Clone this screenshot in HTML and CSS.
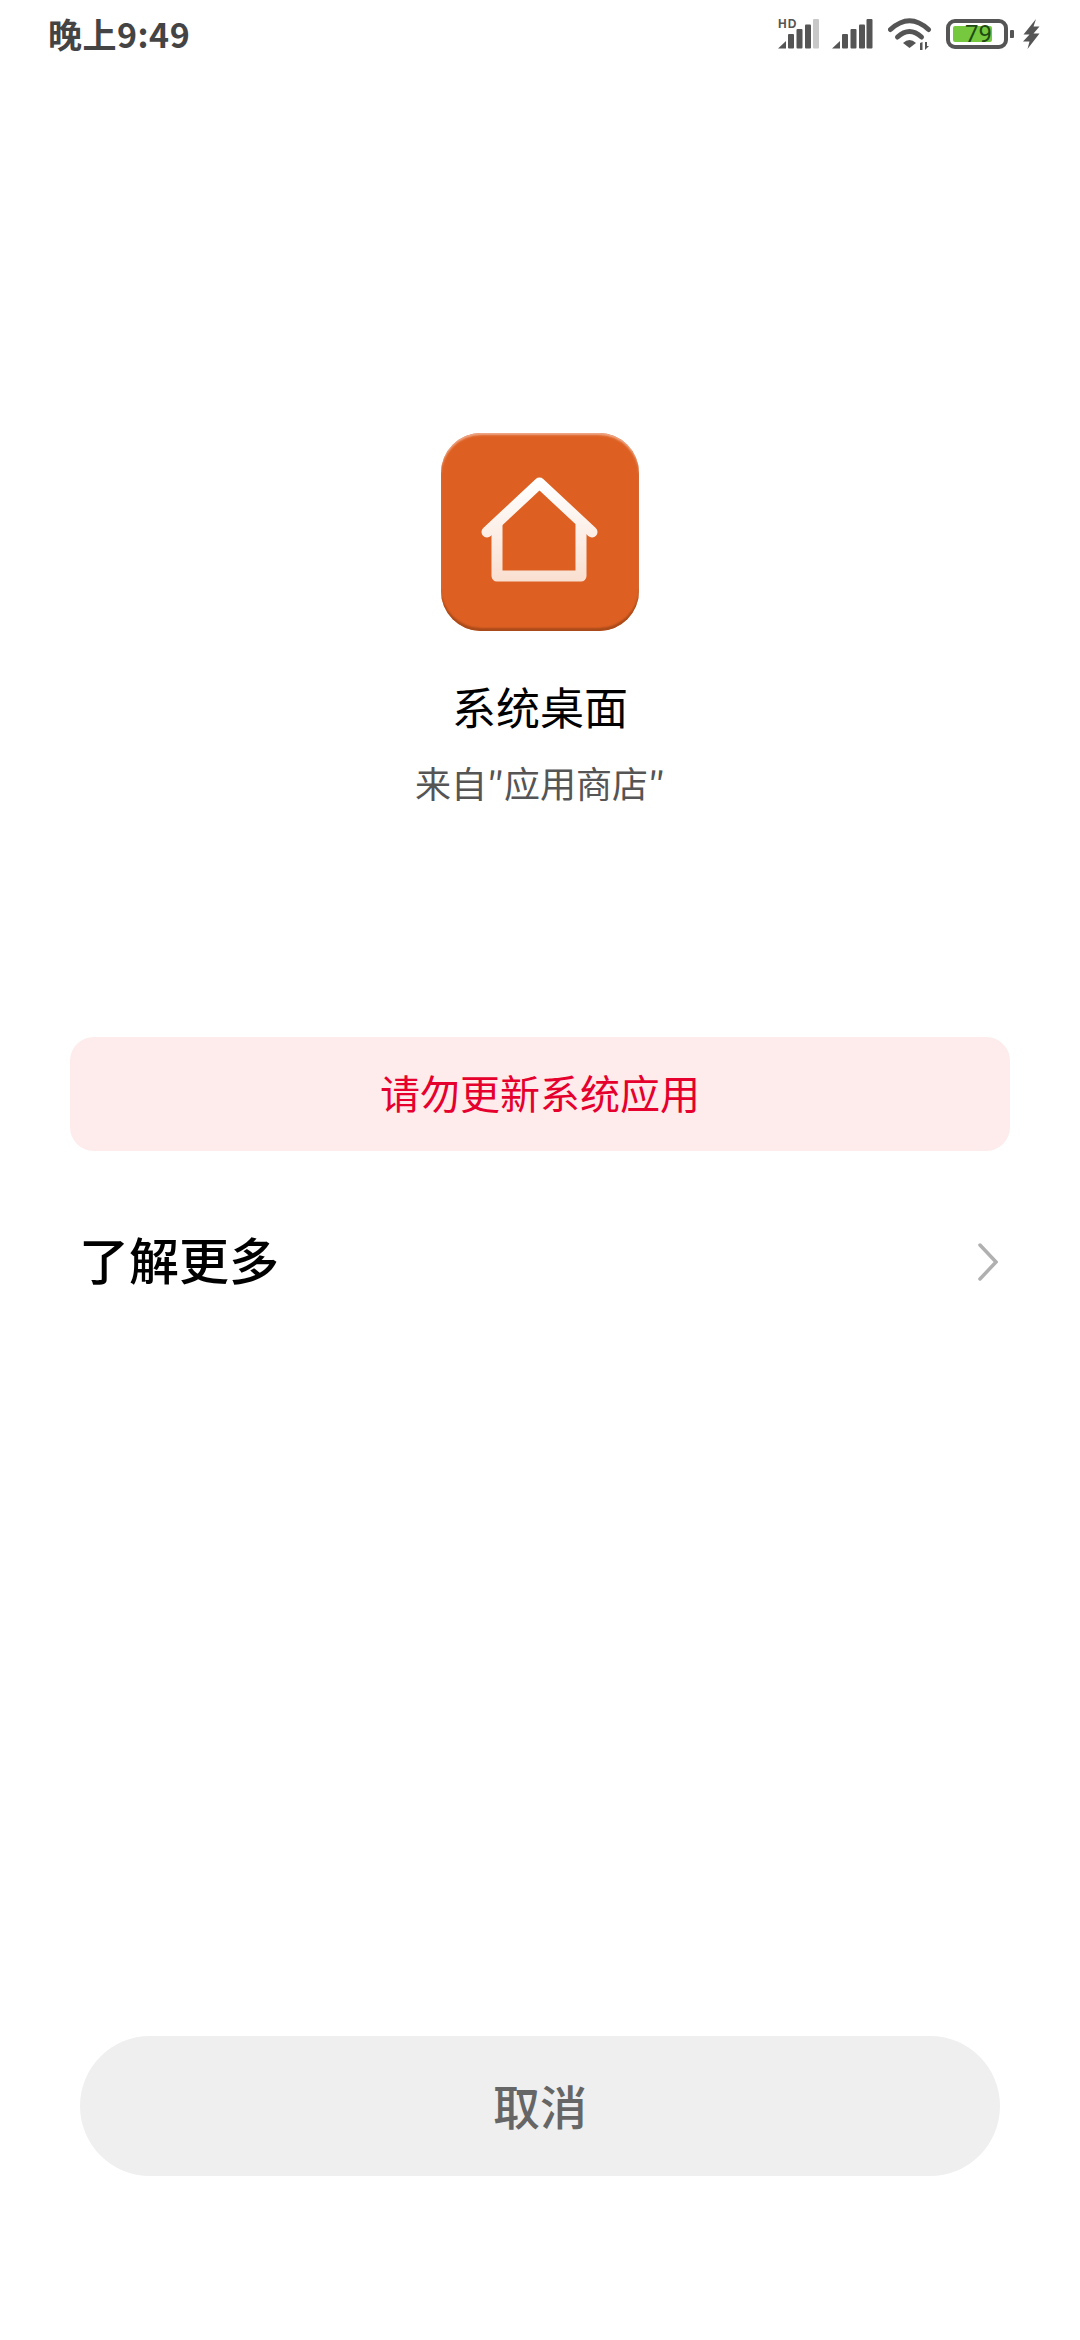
FILE: index.html
```html
<!DOCTYPE html>
<html lang="zh-CN">

<head>
  <meta charset="UTF-8">
  <title>系统桌面</title>
  <link rel="stylesheet" href="styles.css">
</head>

<body>
  <div class="page">

    <div class="status-bar">
      <span class="status-time">晚上9:49</span>
      <div class="status-icons">
        <div class="signal-hd">
          <span class="hd-label">HD</span>
          <svg class="icon-signal" width="42" height="30" viewBox="0 0 42 30">
            <path class="bar" d="M0 29.5 L8 22 V29.5 Z" />
            <rect class="bar" x="10" y="15" width="6" height="14.5" rx="1" />
            <rect class="bar" x="18.5" y="10" width="6" height="19.5" rx="1" />
            <rect class="bar" x="27" y="5.5" width="6" height="24" rx="1" />
            <rect class="bar-off" x="35" y="0" width="6" height="29.5" rx="1" />
          </svg>
        </div>
        <svg class="icon-signal" width="44" height="30" viewBox="0 0 44 30">
          <path class="bar" d="M0 29.5 L8 22 V29.5 Z" />
          <rect class="bar" x="10" y="15" width="6" height="14.5" rx="1" />
          <rect class="bar" x="18.5" y="10" width="6" height="19.5" rx="1" />
          <rect class="bar" x="27" y="5.5" width="6" height="24" rx="1" />
          <rect class="bar" x="34.5" y="0" width="6" height="29.5" rx="1" />
        </svg>
        <svg class="icon-wifi" width="46" height="32" viewBox="0 0 46 32">
          <path class="wifi-arc" d="M2.5 11.5 Q21.5 -6 40.5 11.5" />
          <path class="wifi-arc" d="M9.5 19 Q21.5 8 33.5 19" />
          <path class="bar" d="M15 25 Q21.5 19 28 25 L21.5 30 Z" />
          <path class="bar" d="M32 25 V32 H34.5 V24 Z M37 24 V32 L41 28 H39 V24 Z" />
        </svg>
        <div class="battery-group">
          <div class="battery">
            <svg class="icon-battery" width="69" height="30" viewBox="0 0 69 30">
              <rect class="battery-shell" x="2" y="2" width="58" height="26" rx="7" />
              <rect class="battery-fill" x="7" y="7" width="39" height="16" rx="2" />
              <path class="bar" d="M64 11.5 Q64 11 65 11 H67 Q68 11 68 12 V18 Q68 19 67 19 H65 Q64 19 64 18.5 Z" />
            </svg>
            <span class="battery-level">79</span>
          </div>
          <svg class="icon-bolt" width="17" height="30" viewBox="0 0 17 30">
            <path class="bar" d="M13 0 L0.5 15.5 L6.5 15.5 L0 22.5 L6.5 22.5 L4.5 30 L16.5 14.5 L10.5 14.5 L16.5 7.5 L10.5 7.5 Z" />
          </svg>
        </div>
      </div>
    </div>

    <div class="app-icon">
      <svg width="198" height="198" viewBox="0 0 198 198">
        <defs>
          <linearGradient id="houseStroke" gradientUnits="userSpaceOnUse" x1="0" y1="49" x2="0" y2="148">
            <stop offset="0" stop-color="#fff" />
            <stop offset="1" stop-color="#f9dfd0" />
          </linearGradient>
        </defs>
        <path class="house" d="M56 92 V143 H140 V92" />
        <path class="house" d="M46 99 L98.500 50 L151 99" />
      </svg>
    </div>

    <div class="app-name">系统桌面</div>
    <div class="app-source">来自″应用商店″</div>

    <div class="warning">请勿更新系统应用</div>

    <div class="more-row">
      <span class="more-label">了解更多</span>
      <svg width="20" height="38" viewBox="0 0 20 38">
        <path class="chevron" d="M2 2 L18 19 L2 36" />
      </svg>
    </div>

    <button class="cancel-button">取消</button>

  </div>
</body>

</html>
```

FILE: styles.css
```css
body {
  margin: 0;
  background-color: #ffffff;
  font-family: "Noto Sans CJK SC", "Noto Sans", sans-serif;
}

.page {
  display: flex;
  flex-direction: column;
  min-height: 2340px;
  box-sizing: border-box;
  padding-bottom: 164px;
}

/* status bar */
.status-bar {
  display: flex;
  justify-content: space-between;
  align-items: center;
  height: 68px;
  padding: 0 40px 0 48px;
}

.status-time {
  font-size: 34px;
  line-height: 68px;
  height: 68px;
  font-weight: 700;
  letter-spacing: 0.5px;
  color: #444;
}

.status-icons {
  display: flex;
  align-items: center;
  gap: 12px;
}

.battery-group {
  display: flex;
  align-items: center;
  gap: 8px;
}

.status-icons svg {
  display: block;
}

.signal-hd,
.battery {
  position: relative;
}

.bar {
  fill: #555;
}

.bar-off {
  fill: #c8c8c8;
}

.hd-label {
  position: absolute;
  left: 0;
  top: -1px;
  font-family: "Liberation Sans", sans-serif;
  font-size: 12px;
  line-height: 12px;
  font-weight: bold;
  letter-spacing: 1px;
  color: #555;
}

.wifi-arc {
  fill: none;
  stroke: #555;
  stroke-width: 5;
  stroke-linecap: round;
}

.battery-shell {
  fill: none;
  stroke: #555;
  stroke-width: 4;
}

.battery-fill {
  fill: #76c83e;
}

.battery-level {
  position: absolute;
  left: 19px;
  top: 1px;
  font-family: "Roboto", sans-serif;
  font-size: 24px;
  line-height: 28px;
  color: #1d4a14;
}

/* app header */
.app-icon {
  align-self: center;
  width: 198px;
  height: 198px;
  margin-top: 365px;
  border-radius: 40px;
  background: #dd6022;
  box-shadow: inset 0 -3px 2px #a84a1a, inset 0 2px 2px #f0a98a;
}

.app-icon svg {
  display: block;
  filter: blur(0.6px);
}

.house {
  fill: none;
  stroke: url(#houseStroke);
  stroke-width: 11;
  stroke-linecap: round;
  stroke-linejoin: round;
}

.app-name {
  margin-top: 45px;
  font-size: 44px;
  line-height: 60px;
  text-align: center;
  color: #000;
}

.app-source {
  margin-top: 21px;
  font-size: 36px;
  line-height: 50px;
  text-align: center;
  color: #555;
}

/* warning box */
.warning {
  margin: 230px 70px 0;
  height: 114px;
  line-height: 111px;
  border-radius: 24px;
  background-color: #feebec;
  color: #e6002d;
  font-size: 40px;
  text-align: center;
}

/* learn more */
.more-row {
  display: flex;
  justify-content: space-between;
  align-items: center;
  height: 120px;
  margin-top: 51px;
  padding: 0 82px 0 79px;
}

.more-label {
  font-size: 50px;
  line-height: 112px;
  height: 120px;
  font-weight: 500;
  color: #000;
}

.chevron {
  fill: none;
  stroke: #b0b0b0;
  stroke-width: 3.5;
  stroke-linecap: round;
}

/* cancel */
.cancel-button {
  margin: auto 80px 0;
  height: 140px;
  padding: 0 0 4px;
  border: none;
  border-radius: 70px;
  background-color: #efefef;
  color: #666;
  font-family: inherit;
  font-size: 47px;
  font-weight: 500;
}
```
